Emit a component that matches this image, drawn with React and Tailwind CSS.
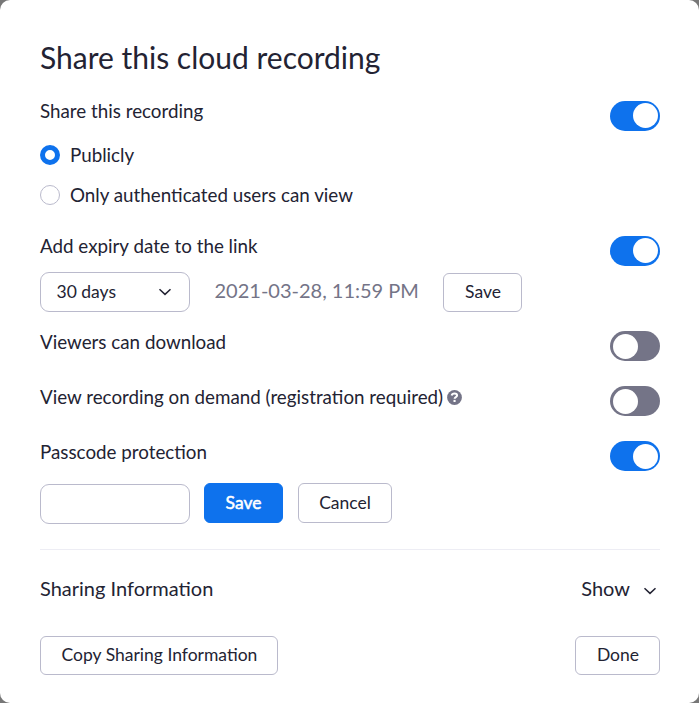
const Toggle = ({ on, low }) => (
  <span className={`flex h-[30px] w-[50px] shrink-0 items-start rounded-full pr-[2px] pl-[3px] ${low ? "pt-[3px]" : "pt-[2px]"} ${on ? "justify-end bg-[#0e72ed]" : "justify-start bg-[#747487]"}`}>
    <span className="h-[25px] w-[25px] rounded-full bg-white" />
  </span>
);

const Chevron = ({ className }) => (
  <svg className={className} width="14" height="10" viewBox="0 0 14 10" fill="none" stroke="#232333" strokeWidth="1.5">
    <path d="M1.5 2.2 7 7.4 12.5 2.2" />
  </svg>
);

const Help = () => (
  <svg className="shrink-0" width="15" height="15" viewBox="0 0 15 15" fill="none">
    <circle cx="7.5" cy="7.5" r="7.4" fill="#747487" />
    <path d="M4.6 5.5C5 4.1 6.1 3.5 7.5 3.5c1.6 0 2.6.8 2.6 2 0 1.7-2.5 1.5-2.5 3.2" stroke="#fff" strokeWidth="2" />
    <path d="M6.5 9.9h2.1V12H6.5z" fill="#fff" />
  </svg>
);

const Btn = ({ children, className }) => (
  <button className={`flex items-center justify-center rounded-[6px] border text-[17.5px] ${className}`}>{children}</button>
);

export default function App() {
  return (
    <div className="h-[703px] w-[699px] overflow-hidden bg-[#777]">
      <main className="flex h-full flex-col rounded-[10px] bg-white px-10 pr-[39px] font-['Lato',sans-serif] text-[18.8px] leading-[24px] text-[#232333]">
        <h1 className="mt-[38px] h-[61px] text-[30px] leading-[38px]">Share this cloud recording</h1>
        <div className="flex h-[44px] justify-between">
          <span>Share this recording</span>
          <div className="pt-[2px]"><Toggle on /></div>
        </div>
        <div className="flex h-[24px] items-center gap-[10px]">
          <span className="h-5 w-5 rounded-full border-[5px] border-[#0e72ed] bg-white" />
          <span>Publicly</span>
        </div>
        <div className="mt-4 flex h-[24px] items-center gap-[10px]">
          <span className="h-5 w-5 rounded-full border border-[#babacc] bg-white" />
          <span>Only authenticated users can view</span>
        </div>
        <div className="mt-[27px] flex h-[38px] justify-between">
          <span>Add expiry date to the link</span>
          <div className="pt-[2px]"><Toggle on /></div>
        </div>
        <div className="flex h-[40px] items-center">
          <div className="flex h-10 w-[150px] items-center justify-between rounded-[9px] border border-[#babacc] pr-[17px] pl-[15.5px] text-[17.5px]">
            <span>30 days</span><Chevron />
          </div>
          <span className="ml-[24.5px] w-[228.5px] pb-[4px] text-[20px] whitespace-nowrap text-[#747487]">2021-03-28, 11:59 PM</span>
          <Btn className="h-[39px] w-[79px] border-[#babacc] pl-px">Save</Btn>
        </div>
        <div className="mt-[18px] flex h-[55px] justify-between">
          <span>Viewers can download</span>
          <div className="pt-[1px]"><Toggle low /></div>
        </div>
        <div className="flex h-[55px] items-start justify-between">
          <span className="flex h-6 items-center gap-[4px]">
            View recording on demand (registration required)
            <Help />
          </span>
          <div className="pt-[1px]"><Toggle low /></div>
        </div>
        <div className="flex h-[43px] justify-between">
          <span>Passcode protection</span>
          <div className="pt-[1px]"><Toggle on low /></div>
        </div>
        <div className="flex h-10">
          <input className="mt-[1px] h-10 w-[150px] rounded-[9px] border border-[#babacc]" />
          <Btn className="ml-[14px] h-10 w-[79px] border-[#0e72ed] bg-[#0e72ed] text-white [-webkit-text-stroke:0.5px_white]">Save</Btn>
          <Btn className="ml-[15px] h-10 w-[94px] border-[#babacc]">Cancel</Btn>
        </div>
        <div className="mt-[26px] border-t border-[#ededf4]" />
        <div className="mt-[26px] flex h-6 items-center justify-between text-[20px]">
          <span>Sharing Information</span>
          <span className="flex items-center gap-[13px] pr-[3px]">Show<Chevron className="mt-[5px]" /></span>
        </div>
        <div className="mt-[36px] flex justify-between">
          <Btn className="h-[39px] w-[238px] border-[#babacc] pb-[2px] pl-px">Copy Sharing Information</Btn>
          <Btn className="h-[39px] w-[85px] border-[#babacc] pb-[2px] pl-px">Done</Btn>
        </div>
      </main>
    </div>
  );
}
